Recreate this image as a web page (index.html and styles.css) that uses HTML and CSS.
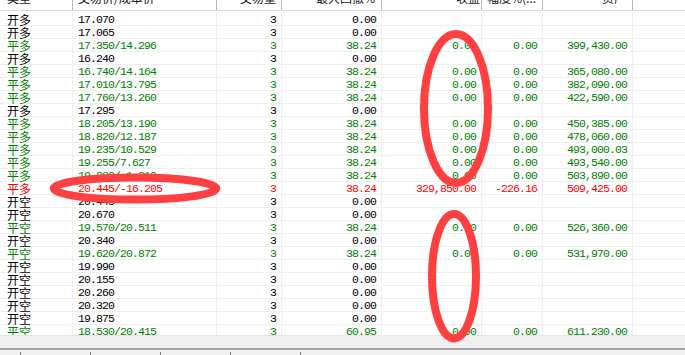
FILE: index.html
```html
<!DOCTYPE html>
<html lang="zh-CN">
<head>
<meta charset="utf-8">
<title>交易记录</title>
<link rel="stylesheet" href="styles.css">
</head>
<body>
<div class="frame">
  <div class="list">
    <div class="head">
      <div class="cell w1 hl">类型</div>
      <div class="cell w2 hl">交易价/成本价</div>
      <div class="cell w3 hr h3">交易量</div>
      <div class="cell w4 hl h4">最大回撤%</div>
      <div class="cell w5 hr h5">收益</div>
      <div class="cell w6 hl h6">幅度%(...</div>
      <div class="cell w7 hr h7">资产</div>
      <div class="cell fill"></div>
    </div>

    <div class="row"><div class="cell w1 t">开多</div><div class="cell w2 l">17.070</div><div class="cell w3 n">3</div><div class="cell w4 n">0.00</div><div class="cell w5 n"></div><div class="cell w6 n"></div><div class="cell w7 n"></div><div class="cell fill"></div></div>
    <div class="row"><div class="cell w1 t">开多</div><div class="cell w2 l">17.065</div><div class="cell w3 n">3</div><div class="cell w4 n">0.00</div><div class="cell w5 n"></div><div class="cell w6 n"></div><div class="cell w7 n"></div><div class="cell fill"></div></div>
    <div class="row g"><div class="cell w1 t">平多</div><div class="cell w2 l">17.350/14.296</div><div class="cell w3 n">3</div><div class="cell w4 n">38.24</div><div class="cell w5 n">0.00</div><div class="cell w6 n">0.00</div><div class="cell w7 n">399,430.00</div><div class="cell fill"></div></div>
    <div class="row"><div class="cell w1 t">开多</div><div class="cell w2 l">16.240</div><div class="cell w3 n">3</div><div class="cell w4 n">0.00</div><div class="cell w5 n"></div><div class="cell w6 n"></div><div class="cell w7 n"></div><div class="cell fill"></div></div>
    <div class="row g"><div class="cell w1 t">平多</div><div class="cell w2 l">16.740/14.164</div><div class="cell w3 n">3</div><div class="cell w4 n">38.24</div><div class="cell w5 n">0.00</div><div class="cell w6 n">0.00</div><div class="cell w7 n">365,080.00</div><div class="cell fill"></div></div>
    <div class="row g"><div class="cell w1 t">平多</div><div class="cell w2 l">17.010/13.795</div><div class="cell w3 n">3</div><div class="cell w4 n">38.24</div><div class="cell w5 n">0.00</div><div class="cell w6 n">0.00</div><div class="cell w7 n">382,090.00</div><div class="cell fill"></div></div>
    <div class="row g"><div class="cell w1 t">平多</div><div class="cell w2 l">17.760/13.260</div><div class="cell w3 n">3</div><div class="cell w4 n">38.24</div><div class="cell w5 n">0.00</div><div class="cell w6 n">0.00</div><div class="cell w7 n">422,590.00</div><div class="cell fill"></div></div>
    <div class="row"><div class="cell w1 t">开多</div><div class="cell w2 l">17.295</div><div class="cell w3 n">3</div><div class="cell w4 n">0.00</div><div class="cell w5 n"></div><div class="cell w6 n"></div><div class="cell w7 n"></div><div class="cell fill"></div></div>
    <div class="row g"><div class="cell w1 t">平多</div><div class="cell w2 l">18.205/13.190</div><div class="cell w3 n">3</div><div class="cell w4 n">38.24</div><div class="cell w5 n">0.00</div><div class="cell w6 n">0.00</div><div class="cell w7 n">450,385.00</div><div class="cell fill"></div></div>
    <div class="row g"><div class="cell w1 t">平多</div><div class="cell w2 l">18.820/12.187</div><div class="cell w3 n">3</div><div class="cell w4 n">38.24</div><div class="cell w5 n">0.00</div><div class="cell w6 n">0.00</div><div class="cell w7 n">478,060.00</div><div class="cell fill"></div></div>
    <div class="row g"><div class="cell w1 t">平多</div><div class="cell w2 l">19.235/10.529</div><div class="cell w3 n">3</div><div class="cell w4 n">38.24</div><div class="cell w5 n">0.00</div><div class="cell w6 n">0.00</div><div class="cell w7 n">493,000.03</div><div class="cell fill"></div></div>
    <div class="row g"><div class="cell w1 t">平多</div><div class="cell w2 l">19.255/7.627</div><div class="cell w3 n">3</div><div class="cell w4 n">38.24</div><div class="cell w5 n">0.00</div><div class="cell w6 n">0.00</div><div class="cell w7 n">493,540.00</div><div class="cell fill"></div></div>
    <div class="row g"><div class="cell w1 t">平多</div><div class="cell w2 l">19.880/-1.310</div><div class="cell w3 n">3</div><div class="cell w4 n">38.24</div><div class="cell w5 n">0.00</div><div class="cell w6 n">0.00</div><div class="cell w7 n">503,890.00</div><div class="cell fill"></div></div>
    <div class="row r"><div class="cell w1 t">平多</div><div class="cell w2 l">20.445/-16.205</div><div class="cell w3 n">3</div><div class="cell w4 n">38.24</div><div class="cell w5 n">329,850.00</div><div class="cell w6 n">-226.16</div><div class="cell w7 n">509,425.00</div><div class="cell fill"></div></div>
    <div class="row"><div class="cell w1 t">开空</div><div class="cell w2 l">20.445</div><div class="cell w3 n">3</div><div class="cell w4 n">0.00</div><div class="cell w5 n"></div><div class="cell w6 n"></div><div class="cell w7 n"></div><div class="cell fill"></div></div>
    <div class="row"><div class="cell w1 t">开空</div><div class="cell w2 l">20.670</div><div class="cell w3 n">3</div><div class="cell w4 n">0.00</div><div class="cell w5 n"></div><div class="cell w6 n"></div><div class="cell w7 n"></div><div class="cell fill"></div></div>
    <div class="row g"><div class="cell w1 t">平空</div><div class="cell w2 l">19.570/20.511</div><div class="cell w3 n">3</div><div class="cell w4 n">38.24</div><div class="cell w5 n">0.00</div><div class="cell w6 n">0.00</div><div class="cell w7 n">526,360.00</div><div class="cell fill"></div></div>
    <div class="row"><div class="cell w1 t">开空</div><div class="cell w2 l">20.340</div><div class="cell w3 n">3</div><div class="cell w4 n">0.00</div><div class="cell w5 n"></div><div class="cell w6 n"></div><div class="cell w7 n"></div><div class="cell fill"></div></div>
    <div class="row g"><div class="cell w1 t">平空</div><div class="cell w2 l">19.620/20.872</div><div class="cell w3 n">3</div><div class="cell w4 n">38.24</div><div class="cell w5 n">0.00</div><div class="cell w6 n">0.00</div><div class="cell w7 n">531,970.00</div><div class="cell fill"></div></div>
    <div class="row"><div class="cell w1 t">开空</div><div class="cell w2 l">19.990</div><div class="cell w3 n">3</div><div class="cell w4 n">0.00</div><div class="cell w5 n"></div><div class="cell w6 n"></div><div class="cell w7 n"></div><div class="cell fill"></div></div>
    <div class="row"><div class="cell w1 t">开空</div><div class="cell w2 l">20.155</div><div class="cell w3 n">3</div><div class="cell w4 n">0.00</div><div class="cell w5 n"></div><div class="cell w6 n"></div><div class="cell w7 n"></div><div class="cell fill"></div></div>
    <div class="row"><div class="cell w1 t">开空</div><div class="cell w2 l">20.260</div><div class="cell w3 n">3</div><div class="cell w4 n">0.00</div><div class="cell w5 n"></div><div class="cell w6 n"></div><div class="cell w7 n"></div><div class="cell fill"></div></div>
    <div class="row"><div class="cell w1 t">开空</div><div class="cell w2 l">20.320</div><div class="cell w3 n">3</div><div class="cell w4 n">0.00</div><div class="cell w5 n"></div><div class="cell w6 n"></div><div class="cell w7 n"></div><div class="cell fill"></div></div>
    <div class="row"><div class="cell w1 t">开空</div><div class="cell w2 l">19.875</div><div class="cell w3 n">3</div><div class="cell w4 n">0.00</div><div class="cell w5 n"></div><div class="cell w6 n"></div><div class="cell w7 n"></div><div class="cell fill"></div></div>
    <div class="row g"><div class="cell w1 t">平空</div><div class="cell w2 l">18.530/20.415</div><div class="cell w3 n">3</div><div class="cell w4 n">60.95</div><div class="cell w5 n">0.00</div><div class="cell w6 n">0.00</div><div class="cell w7 n">611,230.00</div><div class="cell fill"></div></div>
  </div>
  <div class="hbar"></div>
  <div class="sep"></div>
  <div class="tabs"><div class="tab"></div><div class="tab"></div><div class="tab"></div><div class="tab"></div><div class="tab"></div></div>
</div>

<svg class="marks" width="685" height="355" viewBox="0 0 685 355">
  <ellipse cx="456" cy="108.5" rx="32" ry="74.5"/>
  <ellipse cx="135" cy="188.6" rx="81.3" ry="11"/>
  <ellipse cx="454" cy="276.2" rx="22" ry="62.2"/>
</svg>
</body>
</html>
```

FILE: styles.css
```css
* { box-sizing: border-box; margin: 0; padding: 0; }

html, body {
  width: 685px;
  height: 355px;
  overflow: hidden;
  background: #fff;
}

body {
  position: relative;
  font-family: "Liberation Mono", "Noto Sans CJK SC", monospace;
  color: #000;
}

.frame {
  display: flex;
  flex-direction: column;
  height: 355px;
}

.list {
  flex: none;
  height: 336px;
  overflow: hidden;
  background: #fff;
  border-bottom: 1px solid #e6e6e6;
}

.head {
  display: flex;
  height: 21px;
  margin-top: -10px;
  margin-bottom: 2px;
  border-bottom: 1px solid #dcdcdc;
  font-family: "Noto Sans CJK SC", sans-serif;
  font-size: 12px;
  line-height: 15px;
  color: #1a1a1a;
}

.head .cell {
  border-right: 1px solid #b9b9b9;
  overflow: hidden;
}

.head .fill { border-right: none; }

.hl { padding-left: 7px; }
.head .w2 { padding-left: 5px; }
.hr { text-align: right; }
.h3 { padding-right: 5px; }
.h4 { padding-left: 34px; }
.h5 { padding-right: 1px; }
.h6 { padding-left: 5px; }
.h7 { padding-right: 6px; }

.row {
  display: flex;
  height: 13px;
  border-bottom: 1px solid #efefef;
  font-size: 11.5px;
  line-height: 14px;
  color: #000;
}

.row.g { color: #008000; }
.row.r { color: #ff0000; }

.cell {
  flex: none;
  height: 100%;
  border-right: 1px solid #efefef;
  white-space: nowrap;
}

.fill {
  flex: 1;
  border-right: none;
}

.w1 { width: 73px; }
.w2 { width: 144px; }
.w3 { width: 65px; }
.w4 { width: 100px; }
.w5 { width: 100px; }
.w6 { width: 61px; }
.w7 { width: 90px; }

.t {
  font-family: "Noto Sans CJK SC", sans-serif;
  font-size: 12px;
  line-height: 13px;
  padding-left: 7px;
}

.l {
  padding-left: 5px;
  letter-spacing: -0.9px;
}

.n {
  text-align: right;
  padding-right: 5px;
  letter-spacing: -0.9px;
}

.hbar {
  flex: none;
  height: 12px;
  background: #f0f0f0;
}

.sep {
  flex: none;
  height: 2px;
  background: #a0a0a0;
}

.tabs {
  flex: none;
  display: flex;
  height: 5px;
  padding-left: 20px;
  background: #f0f0f0;
}

.tab {
  width: 70px;
  margin-top: 2px;
  border-left: 1px solid #7a7a7a;
}

.marks {
  position: absolute;
  top: 0;
  left: 0;
  pointer-events: none;
}

.marks ellipse {
  fill: none;
  stroke: #fe4040;
  stroke-width: 8;
}
```
